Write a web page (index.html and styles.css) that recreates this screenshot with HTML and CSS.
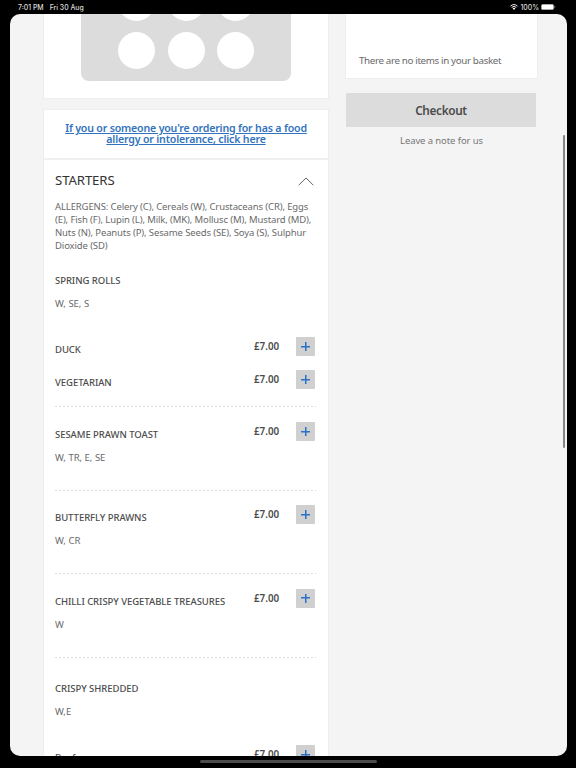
FILE: index.html
```html
<!DOCTYPE html>
<html lang="en">
<head>
<meta charset="UTF-8" />
<meta name="viewport" content="width=device-width, initial-scale=1" />
<title>Menu</title>
<link rel="stylesheet" href="styles.css">
</head>
<body>
  <header class="status-bar">
    <span class="status-time">7:01 PM</span>
    <span class="status-date">Fri 30 Aug</span>
    <svg class="wifi" viewBox="0 0 16 12">
      <path d="M1 4.2a10.5 10.5 0 0 1 14 0M3.4 6.8a7 7 0 0 1 9.2 0" fill="none" stroke="#fff" stroke-width="1.9"/>
      <path d="M8 11.8L5.3 8.9a4 4 0 0 1 5.4 0z" fill="#fff"/>
    </svg>
    <span class="status-percent">100%</span>
    <svg class="battery" viewBox="0 0 15 6">
      <rect x="0.3" y="0.3" width="12.4" height="5.4" rx="1.5" fill="#fff" stroke="#888" stroke-width="0.5"/>
      <path d="M13.4 2v2q1-.3 1-1t-1-1z" fill="#999"/>
    </svg>
  </header>

  <div class="screen">
    <main class="menu-column">
      <div class="card photo-card">
        <div class="placeholder">
          <i class="dot"></i><i class="dot"></i><i class="dot"></i>
          <i class="dot"></i><i class="dot"></i><i class="dot"></i>
        </div>
      </div>

      <div class="card menu-card">
        <div class="allergy">
          <a class="allergy-link" href="#">If you or someone you're ordering for has a food<br>allergy or intolerance, click here</a>
        </div>

        <section class="category">
          <div class="category-head">
            <h2 class="category-title">STARTERS</h2>
            <svg class="chevron" viewBox="0 0 16 9"><path d="M0.7 8.2L8 1l7.3 7.2" fill="none" stroke="#555" stroke-width="0.9"/></svg>
          </div>
          <p class="category-info">ALLERGENS: Celery (C), Cereals (W), Crustaceans (CR), Eggs<br>(E), Fish (F), Lupin (L), Milk, (MK), Mollusc (M), Mustard (MD),<br>Nuts (N), Peanuts (P), Sesame Seeds (SE), Soya (S), Sulphur<br>Dioxide (SD)</p>

          <div class="item group first">
            <h3 class="name">SPRING ROLLS</h3>
            <p class="desc">W, SE, S</p>
            <div class="options">
              <div class="row"><span class="name option">DUCK</span><span class="price">£7.00</span><button class="add" aria-label="Add"></button></div>
              <div class="row"><span class="name option">VEGETARIAN</span><span class="price">£7.00</span><button class="add" aria-label="Add"></button></div>
            </div>
          </div>

          <div class="item">
            <div class="row"><h3 class="name">SESAME PRAWN TOAST</h3><span class="price">£7.00</span><button class="add" aria-label="Add"></button></div>
            <p class="desc">W, TR, E, SE</p>
          </div>

          <div class="item">
            <div class="row"><h3 class="name">BUTTERFLY PRAWNS</h3><span class="price">£7.00</span><button class="add" aria-label="Add"></button></div>
            <p class="desc">W, CR</p>
          </div>

          <div class="item">
            <div class="row"><h3 class="name">CHILLI CRISPY VEGETABLE TREASURES</h3><span class="price">£7.00</span><button class="add" aria-label="Add"></button></div>
            <p class="desc">W</p>
          </div>

          <div class="item group">
            <h3 class="name">CRISPY SHREDDED</h3>
            <p class="desc">W,E</p>
            <div class="options">
              <div class="row"><span class="name option">Beef</span><span class="price">£7.00</span><button class="add" aria-label="Add"></button></div>
            </div>
          </div>
        </section>
      </div>
    </main>

    <aside class="basket-column">
      <div class="card basket">There are no items in your basket</div>
      <button class="checkout">Checkout</button>
      <a class="note">Leave a note for us</a>
    </aside>

    <div class="scrollbar"></div>
  </div>

  <div class="home-bar"></div>
</body>
</html>
```
FILE: styles.css
```css
* {
  box-sizing: border-box;
}

body {
  margin: 0;
  width: 576px;
  height: 768px;
  overflow: hidden;
  background: #000;
  font-family: "Noto Sans", "Open Sans", sans-serif;
  font-size: 9.5px;
  color: #6a6a6a;
}

h2, h3, p {
  margin: 0;
  font-weight: 400;
}

/* Status bar */
.status-bar {
  display: flex;
  align-items: center;
  height: 14px;
  padding: 0 20px 0 18px;
  font: 500 6.9px Inter, sans-serif;
  color: #ddd;
}

.status-date {
  margin-left: 6px;
}

.wifi {
  width: 8px;
  height: 6px;
  margin-left: auto;
}

.status-percent {
  margin: 0 2px;
}

.battery {
  width: 15px;
  height: 6px;
}

.screen {
  position: relative;
  display: flex;
  align-items: flex-start;
  width: 557px;
  height: 742px;
  margin-left: 9.5px;
  padding-left: 33.5px;
  border-radius: 10px;
  background: #f4f4f4;
  overflow: hidden;
}

.card {
  background: #fff;
  border: 1px solid #eee;
}

/* Left column */
.menu-column {
  width: 286px;
}

.photo-card {
  height: 85px;
  border-top: 0;
}

.placeholder {
  display: grid;
  grid-template-columns: repeat(3, 37px);
  gap: 11px 12.5px;
  align-content: end;
  justify-content: center;
  width: 210px;
  height: 67px;
  margin-left: 37px;
  padding-bottom: 12px;
  border-radius: 0 0 8px 8px;
  background: #dcdcdc;
  overflow: hidden;
}

.dot {
  width: 37px;
  height: 37px;
  border-radius: 50%;
  background: #fff;
}

.menu-card {
  margin-top: 10px;
}

.allergy {
  height: 50px;
  padding-top: 13px;
  border-bottom: 2px solid #f0f0f0;
  text-align: center;
}

.allergy-link {
  display: block;
  font-size: 10.6px;
  font-weight: 600;
  line-height: 11px;
  letter-spacing: -0.18px;
  color: #3273bd;
}

.category {
  padding: 0 12px 0 11px;
}

.category-head {
  display: flex;
  align-items: center;
  justify-content: space-between;
  height: 40px;
  padding-right: 2px;
}

.category-title {
  font-size: 13.2px;
  letter-spacing: -0.1px;
  color: #333;
}

.chevron {
  width: 16px;
  height: 9px;
  margin-top: 3px;
}

.category-info {
  line-height: 13px;
  letter-spacing: -0.12px;
  white-space: nowrap;
}

/* Menu items */
.item {
  height: 83.4px;
  padding-top: 14.5px;
  background: repeating-linear-gradient(90deg, #ddd 0 2px, transparent 2px 4px) bottom / 100% 1px no-repeat;
}

.group {
  height: auto;
  padding: 21px 0 18px;
}

.first {
  padding-top: 18.6px;
}

.row {
  display: flex;
  height: 19px;
}

.name {
  flex: 1;
  font-size: 9.5px;
  font-weight: 500;
  line-height: 19px;
  letter-spacing: -0.05px;
  white-space: nowrap;
  color: #4c4c4c;
}

.row .name {
  padding-top: 3px;
}

.price {
  width: 42px;
  font-size: 9.8px;
  font-weight: 600;
  line-height: 19px;
  color: #4c4c4c;
}

.desc {
  line-height: 20px;
  margin-top: 7px;
}

.group .desc {
  margin-top: 4px;
}

.options {
  display: grid;
  gap: 14.4px;
  margin-top: 23.4px;
}

.add {
  width: 19px;
  height: 19px;
  margin-right: 1px;
  padding: 0;
  border: 0;
  border-radius: 1px;
  background:
    linear-gradient(#2a72c8, #2a72c8) center / 9px 1.5px no-repeat,
    linear-gradient(#2a72c8, #2a72c8) center / 1.5px 9px no-repeat,
    #d0d0d0;
}

/* Right column */
.basket-column {
  display: flex;
  flex-direction: column;
  align-items: center;
  width: 193px;
  margin-left: 16px;
}

.basket {
  width: 193px;
  height: 65px;
  padding: 40px 0 0 13px;
  border-top: 0;
  font-size: 9.8px;
  line-height: 14px;
  letter-spacing: -0.36px;
}

.checkout {
  width: 190px;
  height: 34px;
  margin: 14px 1px 0 0;
  padding: 0;
  border: 0;
  background: #dcdcdc;
  font: 600 11.8px/34px "Noto Sans", sans-serif;
  letter-spacing: -0.35px;
  color: #4c4c4c;
}

.note {
  margin-top: 7px;
  line-height: 14px;
  letter-spacing: -0.1px;
  color: #777;
}

.scrollbar {
  position: absolute;
  top: 121px;
  right: 2px;
  width: 2px;
  height: 313px;
  border-radius: 1px;
  background: #858585;
}

.home-bar {
  width: 177px;
  height: 3px;
  margin: 4px auto 0;
  border-radius: 2px;
  background: #4c4c4c;
}
```
